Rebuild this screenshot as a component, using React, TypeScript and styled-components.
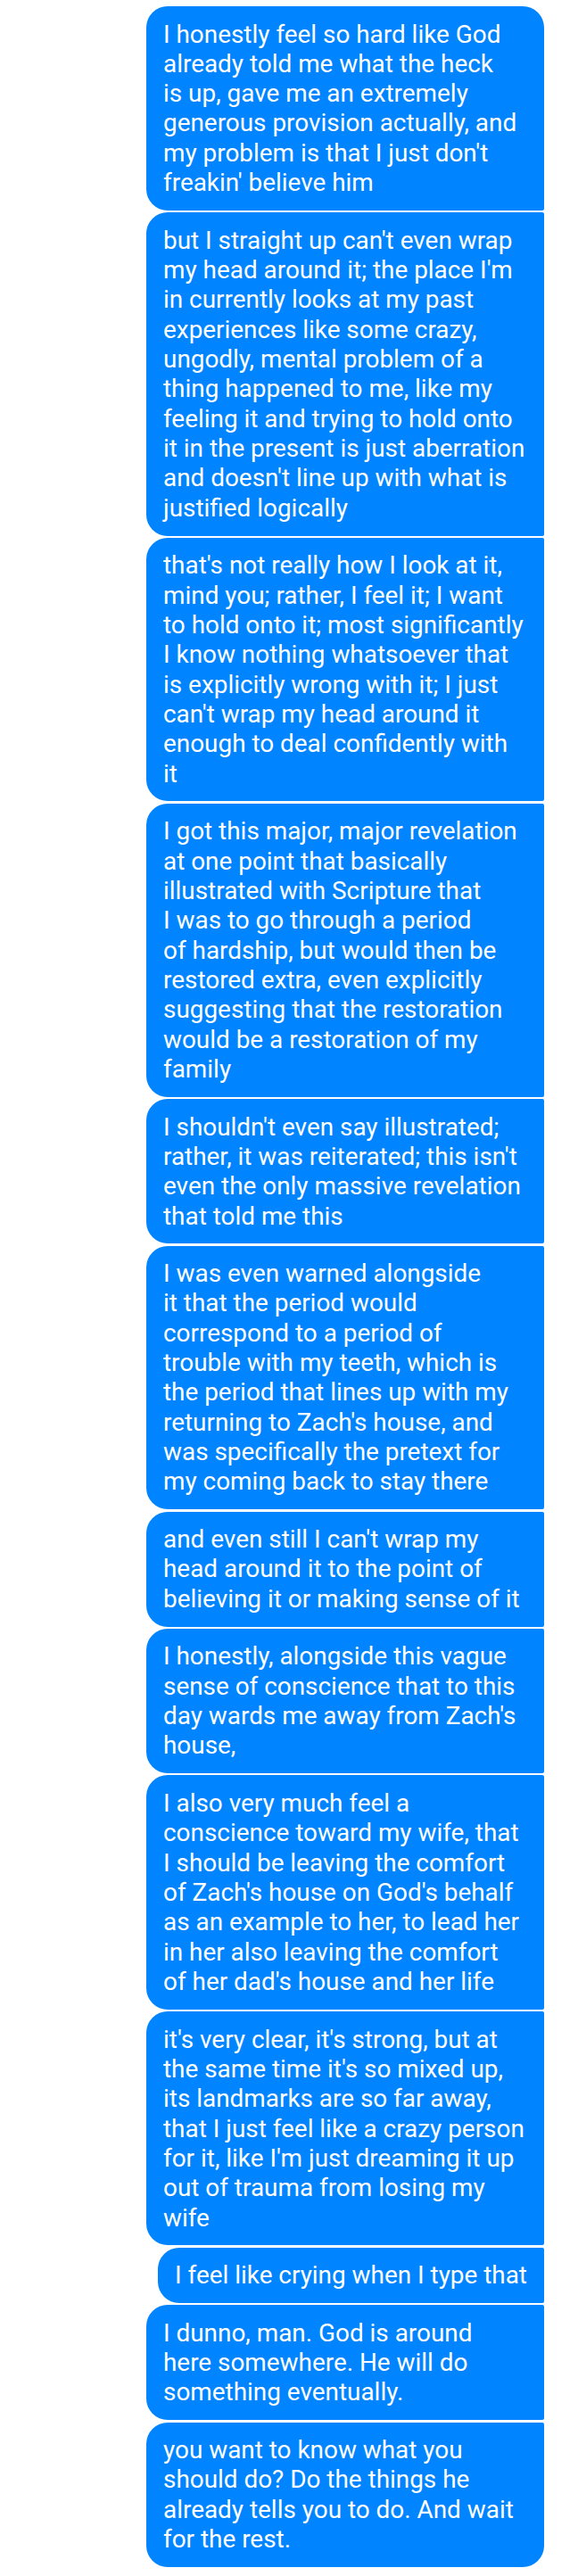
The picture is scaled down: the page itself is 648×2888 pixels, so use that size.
import React from "react";
import styled, { createGlobalStyle } from "styled-components";

const GlobalStyle = createGlobalStyle`
  html, body {
    margin: 0;
    padding: 0;
    background: #ffffff;
  }
  body {
    font-family: Roboto, "Noto Sans", "Liberation Sans", sans-serif;
    -webkit-font-smoothing: antialiased;
  }
`;

const Thread = styled.div`
  display: flex;
  flex-direction: column;
  align-items: flex-end;
  gap: 2.3px;
  padding: 7px 38px 9px 0;
  background: #ffffff;
  min-height: 2888px;
  box-sizing: border-box;
`;

const Bubble = styled.div<{ $first?: boolean; $last?: boolean; $fit?: boolean }>`
  box-sizing: border-box;
  width: ${(p) => (p.$fit ? "auto" : "446px")};
  background: #0084ff;
  color: #ffffff;
  font-family: Roboto, "Noto Sans", "Liberation Sans", sans-serif;
  font-size: 27.9px;
  line-height: 33.33px;
  letter-spacing: 0;
  padding: 14.5px 19px 14.5px 19px;
  white-space: pre;
  border-radius: 24px ${(p) => (p.$first ? "24px" : "2px")}
    ${(p) => (p.$last ? "24px" : "2px")} 24px;
`;

const messages: string[] = [
  `I honestly feel so hard like God
already told me what the heck
is up, gave me an extremely
generous provision actually, and
my problem is that I just don't
freakin' believe him`,
  `but I straight up can't even wrap
my head around it; the place I'm
in currently looks at my past
experiences like some crazy,
ungodly, mental problem of a
thing happened to me, like my
feeling it and trying to hold onto
it in the present is just aberration
and doesn't line up with what is
justified logically`,
  `that's not really how I look at it,
mind you; rather, I feel it; I want
to hold onto it; most significantly
I know nothing whatsoever that
is explicitly wrong with it; I just
can't wrap my head around it
enough to deal confidently with
it`,
  `I got this major, major revelation
at one point that basically
illustrated with Scripture that
I was to go through a period
of hardship, but would then be
restored extra, even explicitly
suggesting that the restoration
would be a restoration of my
family`,
  `I shouldn't even say illustrated;
rather, it was reiterated; this isn't
even the only massive revelation
that told me this`,
  `I was even warned alongside
it that the period would
correspond to a period of
trouble with my teeth, which is
the period that lines up with my
returning to Zach's house, and
was specifically the pretext for
my coming back to stay there`,
  `and even still I can't wrap my
head around it to the point of
believing it or making sense of it`,
  `I honestly, alongside this vague
sense of conscience that to this
day wards me away from Zach's
house,`,
  `I also very much feel a
conscience toward my wife, that
I should be leaving the comfort
of Zach's house on God's behalf
as an example to her, to lead her
in her also leaving the comfort
of her dad's house and her life`,
  `it's very clear, it's strong, but at
the same time it's so mixed up,
its landmarks are so far away,
that I just feel like a crazy person
for it, like I'm just dreaming it up
out of trauma from losing my
wife`,
  `I feel like crying when I type that`,
  `I dunno, man. God is around
here somewhere. He will do
something eventually.`,
  `you want to know what you
should do? Do the things he
already tells you to do. And wait
for the rest.`,
];

export default function App() {
  return (
    <>
      <GlobalStyle />
      <Thread>
        {messages.map((m, i) => (
          <Bubble
            key={i}
            $first={i === 0}
            $last={i === messages.length - 1}
            $fit={!m.includes("\n")}
          >
            {m}
          </Bubble>
        ))}
      </Thread>
    </>
  );
}
